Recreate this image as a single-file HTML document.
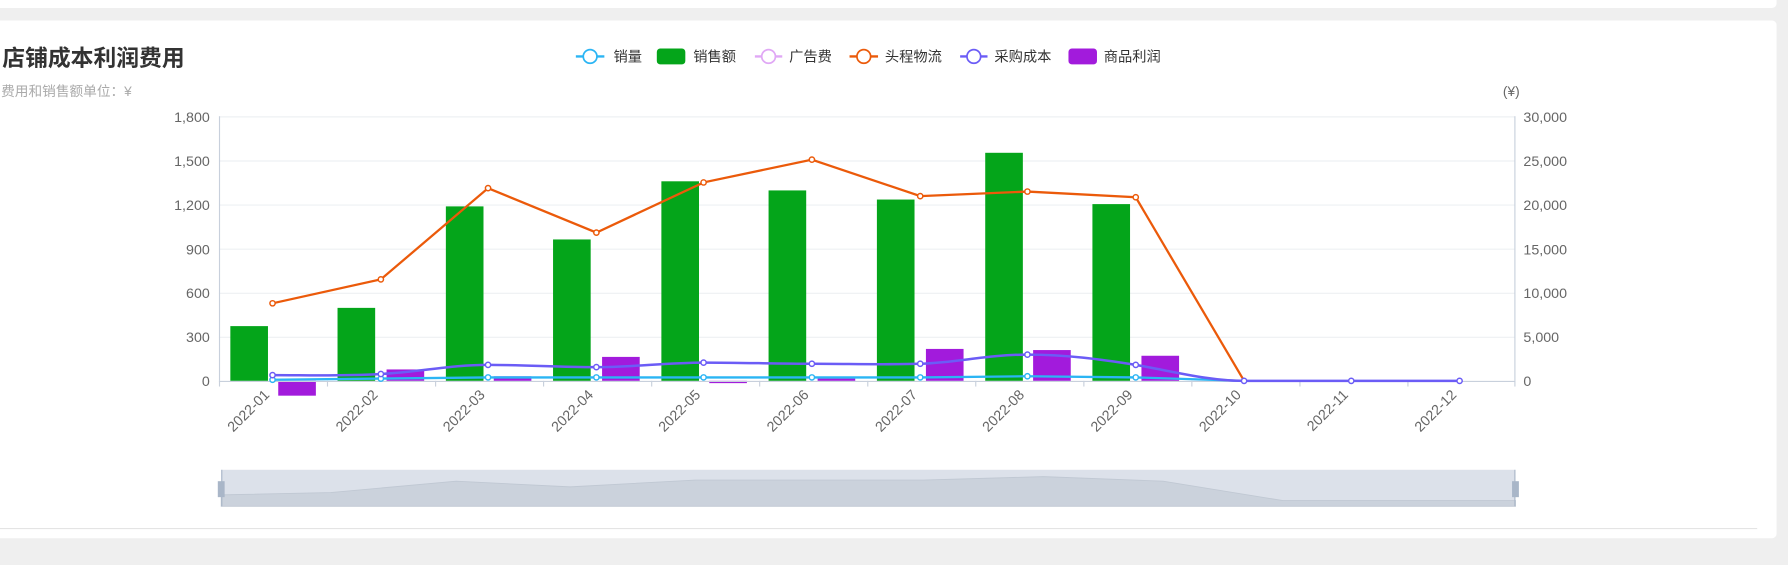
<!DOCTYPE html>
<html><head><meta charset="utf-8"><style>
html,body{margin:0;padding:0;background:#efefef;width:1788px;height:565px;overflow:hidden}
svg{display:block}
text{font-family:"Liberation Sans","Noto Sans CJK SC",sans-serif}
</style></head><body>
<svg width="1788" height="565" viewBox="0 0 1568 495.5" preserveAspectRatio="none">
<rect x="0" y="0" width="1568" height="495.5" fill="#efefef"/>
<rect x="-10" y="-10" width="1568" height="17" rx="4" fill="#fff"/>
<rect x="-10" y="18" width="1568" height="454" rx="4" fill="#fff"/>
<line x1="0" y1="463.5" x2="1541" y2="463.5" stroke="#e4e4e4"/>
<text x="2" y="58" font-size="20" font-weight="bold" fill="#333">店铺成本利润费用</text>
<text x="1" y="84" font-size="12" fill="#aaa">费用和销售额单位：¥</text>
<text x="1318" y="84" font-size="12" fill="#666">(¥)</text>
<!-- legend -->
<g font-size="12.5" fill="#333">
<line x1="505" y1="49.5" x2="530" y2="49.5" stroke="#2bb5f4" stroke-width="2"/><circle cx="517.5" cy="49.5" r="6" fill="#fff" stroke="#2bb5f4" stroke-width="1.5"/><text x="538" y="54">销量</text>
<rect x="576" y="42.5" width="25" height="14" rx="3" fill="#04a51a"/><text x="608" y="54">销售额</text>
<line x1="662" y1="49.5" x2="686" y2="49.5" stroke="#e0a8f5" stroke-width="2"/><circle cx="674" cy="49.5" r="6" fill="#fff" stroke="#e0a8f5" stroke-width="1.5"/><text x="692" y="54">广告费</text>
<line x1="745" y1="49.5" x2="770" y2="49.5" stroke="#eb5a0a" stroke-width="2"/><circle cx="757.5" cy="49.5" r="6" fill="#fff" stroke="#eb5a0a" stroke-width="1.5"/><text x="776" y="54">头程物流</text>
<line x1="842" y1="49.5" x2="866" y2="49.5" stroke="#6b5cf6" stroke-width="2"/><circle cx="854" cy="49.5" r="6" fill="#fff" stroke="#6b5cf6" stroke-width="1.5"/><text x="872" y="54">采购成本</text>
<rect x="937" y="42.5" width="25" height="14" rx="3" fill="#a21bdc"/><text x="968" y="54">商品利润</text>
</g>
<!-- grid -->
<g stroke="#eef0f3">
<line x1="192" y1="102.5" x2="1329" y2="102.5"/><line x1="192" y1="141.2" x2="1329" y2="141.2"/><line x1="192" y1="179.8" x2="1329" y2="179.8"/><line x1="192" y1="218.5" x2="1329" y2="218.5"/><line x1="192" y1="257.2" x2="1329" y2="257.2"/><line x1="192" y1="295.8" x2="1329" y2="295.8"/>
</g>
<line x1="192.5" y1="102" x2="192.5" y2="334" stroke="#c8d0dc"/>
<line x1="1328.5" y1="102" x2="1328.5" y2="334" stroke="#c8d0dc"/>
<g font-size="12.5" fill="#666" text-anchor="end">
<text x="184" y="107">1,800</text><text x="184" y="145.5">1,500</text><text x="184" y="184">1,200</text><text x="184" y="223">900</text><text x="184" y="261.5">600</text><text x="184" y="300">300</text><text x="184" y="338.5">0</text>
</g>
<g font-size="12.5" fill="#666">
<text x="1336" y="107">30,000</text><text x="1336" y="145.5">25,000</text><text x="1336" y="184">20,000</text><text x="1336" y="223">15,000</text><text x="1336" y="261.5">10,000</text><text x="1336" y="300">5,000</text><text x="1336" y="338.5">0</text>
</g>
<!-- bars -->
<g fill="#04a51a">
<rect x="202" y="286" width="33" height="48"/><rect x="296" y="270" width="33" height="64"/><rect x="391" y="181" width="33" height="153"/><rect x="485" y="210" width="33" height="124"/><rect x="580" y="159" width="33" height="175"/><rect x="674" y="167" width="33" height="167"/><rect x="769" y="175" width="33" height="159"/><rect x="864" y="134" width="33" height="200"/><rect x="958" y="179" width="33" height="155"/>
</g>
<g fill="#a21bdc">
<rect x="244" y="334" width="33" height="13"/><rect x="339" y="324" width="33" height="10"/><rect x="433" y="330" width="33" height="4"/><rect x="528" y="313" width="33" height="21"/><rect x="622" y="334" width="33" height="2"/><rect x="717" y="332" width="33" height="2"/><rect x="812" y="306" width="33" height="28"/><rect x="906" y="307" width="33" height="27"/><rect x="1001" y="312" width="33" height="22"/>
</g>
<line x1="192" y1="334.5" x2="1329" y2="334.5" stroke="#c8d0dc"/>
<g stroke="#c8d0dc">
<line x1="192.5" y1="334" x2="192.5" y2="339"/><line x1="287.2" y1="334" x2="287.2" y2="339"/><line x1="382" y1="334" x2="382" y2="339"/><line x1="476.7" y1="334" x2="476.7" y2="339"/><line x1="571.5" y1="334" x2="571.5" y2="339"/><line x1="666.2" y1="334" x2="666.2" y2="339"/><line x1="761" y1="334" x2="761" y2="339"/><line x1="855.7" y1="334" x2="855.7" y2="339"/><line x1="950.5" y1="334" x2="950.5" y2="339"/><line x1="1045.2" y1="334" x2="1045.2" y2="339"/><line x1="1140" y1="334" x2="1140" y2="339"/><line x1="1234.7" y1="334" x2="1234.7" y2="339"/><line x1="1328.5" y1="334" x2="1328.5" y2="339"/>
</g>
<!-- lines -->
<polyline fill="none" stroke="#2bb5f4" stroke-width="2" points="239,333 334,332 428,331 523,331 617,331 712,331 807,331 901,330 996,331 1091,334"/>
<path fill="none" stroke="#6b5cf6" stroke-width="2.2" d="M239,329 C270,329 300,330 334,328 C370,326 395,320 428,320 C460,320 490,322 523,322 C555,322 585,318 617,318 C650,318 680,319 712,319 C745,319 775,320 807,319 C840,318 865,311 901,311 C935,311 965,315 996,320 C1030,326 1060,334 1091,334 L1280,334"/>
<polyline fill="none" stroke="#eb5a0a" stroke-width="2" points="239,266 334,245 428,165 523,204 617,160 712,140 807,172 901,168 996,173 1091,334"/>
<g fill="#fff" stroke-width="1.3">
<g stroke="#2bb5f4"><circle cx="239" cy="333" r="2.3"/><circle cx="334" cy="332" r="2.3"/><circle cx="428" cy="331" r="2.3"/><circle cx="523" cy="331" r="2.3"/><circle cx="617" cy="331" r="2.3"/><circle cx="712" cy="331" r="2.3"/><circle cx="807" cy="331" r="2.3"/><circle cx="901" cy="330" r="2.3"/><circle cx="996" cy="331" r="2.3"/></g>
<g stroke="#eb5a0a"><circle cx="239" cy="266" r="2.3"/><circle cx="334" cy="245" r="2.3"/><circle cx="428" cy="165" r="2.3"/><circle cx="523" cy="204" r="2.3"/><circle cx="617" cy="160" r="2.3"/><circle cx="712" cy="140" r="2.3"/><circle cx="807" cy="172" r="2.3"/><circle cx="901" cy="168" r="2.3"/><circle cx="996" cy="173" r="2.3"/></g>
<g stroke="#6b5cf6"><circle cx="239" cy="329" r="2.3"/><circle cx="334" cy="328" r="2.3"/><circle cx="428" cy="320" r="2.3"/><circle cx="523" cy="322" r="2.3"/><circle cx="617" cy="318" r="2.3"/><circle cx="712" cy="319" r="2.3"/><circle cx="807" cy="319" r="2.3"/><circle cx="901" cy="311" r="2.3"/><circle cx="996" cy="320" r="2.3"/><circle cx="1091" cy="334" r="2.3"/><circle cx="1185" cy="334" r="2.3"/><circle cx="1280" cy="334" r="2.3"/></g>
</g>
<!-- x labels -->
<g font-size="12.5" fill="#666" text-anchor="end">
<text transform="translate(237,347) rotate(-45)">2022-01</text>
<text transform="translate(332,347) rotate(-45)">2022-02</text>
<text transform="translate(426,347) rotate(-45)">2022-03</text>
<text transform="translate(521,347) rotate(-45)">2022-04</text>
<text transform="translate(615,347) rotate(-45)">2022-05</text>
<text transform="translate(710,347) rotate(-45)">2022-06</text>
<text transform="translate(805,347) rotate(-45)">2022-07</text>
<text transform="translate(899,347) rotate(-45)">2022-08</text>
<text transform="translate(994,347) rotate(-45)">2022-09</text>
<text transform="translate(1089,347) rotate(-45)">2022-10</text>
<text transform="translate(1183,347) rotate(-45)">2022-11</text>
<text transform="translate(1278,347) rotate(-45)">2022-12</text>
</g>
<!-- datazoom -->
<rect x="194" y="412" width="1135" height="32" fill="#dce1ea"/>
<path d="M194,434 L290,432 L400,422 L500,427 L610,421 L810,421 L915,418 L1020,422 L1125,439 L1329,439 L1329,444 L194,444 Z" fill="#cbd2dc" stroke="#c0c8d3" stroke-width="0.8"/>
<line x1="194.5" y1="412" x2="194.5" y2="444" stroke="#a9b6c8"/>
<line x1="1328.5" y1="412" x2="1328.5" y2="444" stroke="#a9b6c8"/>
<rect x="191" y="422" width="6" height="14" fill="#a9b6c8"/>
<rect x="1326" y="422" width="6" height="14" fill="#a9b6c8"/>
</svg>
</body></html>
